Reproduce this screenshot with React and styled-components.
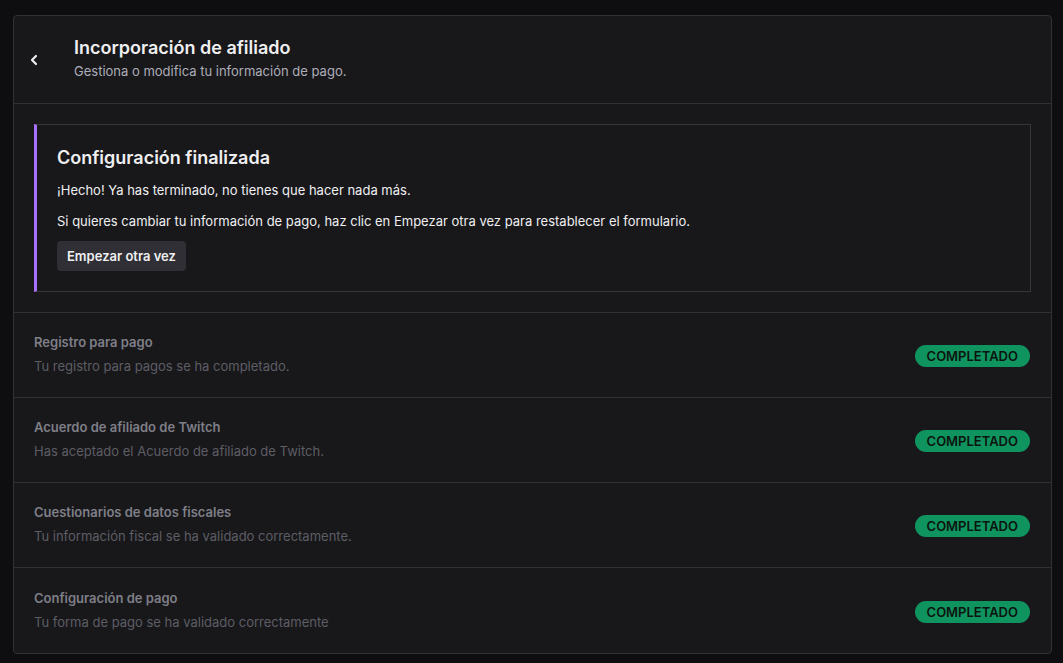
import styled, { createGlobalStyle } from "styled-components";

const GlobalStyle = createGlobalStyle`
  html, body {
    margin: 0;
    background: #0e0e10;
    font-family: Inter, "Noto Sans", "Liberation Sans", sans-serif;
    color: #efeff1;
  }
  * { box-sizing: border-box; }
`;

const Page = styled.div`
  padding: 15px 11px 10px 13px;
`;

const Card = styled.div`
  background: #18181b;
  border: 1px solid #303035;
  border-radius: 4px;
  overflow: hidden;
`;

const Header = styled.div`
  display: flex;
  align-items: center;
  height: 88px;
  padding: 0 20px 0 5px;
  border-bottom: 1px solid #303035;
`;

const BackButton = styled.button`
  width: 30px;
  height: 30px;
  display: flex;
  align-items: center;
  justify-content: center;
  background: none;
  border: 0;
  padding: 0;
  margin-right: 25px;
  color: #efeff1;
  cursor: pointer;
`;

const HeaderText = styled.div`
  display: flex;
  flex-direction: column;
  gap: 3px;
  margin-top: -2px;
`;

const Title = styled.h1`
  margin: 0;
  font-size: 18px;
  font-weight: 600;
  line-height: 22px;
  color: #efeff1;
`;

const Subtitle = styled.p`
  margin: 0;
  font-size: 13px;
  line-height: 18px;
  color: #adadb8;
`;

const Section = styled.div`
  padding: 20px 20px;
  border-bottom: 1px solid #303035;
`;

const Notice = styled.div`
  border: 1px solid #35353b;
  border-left: 3px solid #a970ff;
  padding: 22px 20px 20px;
  display: flex;
  flex-direction: column;
  align-items: flex-start;
`;

const NoticeTitle = styled.h2`
  margin: 0 0 12px;
  font-size: 18px;
  font-weight: 600;
  line-height: 22px;
  color: #efeff1;
`;

const NoticeText = styled.p`
  margin: 0 0 13px;
  font-size: 13px;
  line-height: 18px;
  color: #efeff1;
`;

const Button = styled.button`
  margin-top: -2px;
  height: 30px;
  padding: 0 10px;
  border: 0;
  border-radius: 4px;
  background: #2f2f35;
  color: #efeff1;
  font-family: inherit;
  font-size: 13px;
  font-weight: 600;
  cursor: pointer;
`;

const Step = styled.div`
  display: flex;
  align-items: center;
  justify-content: space-between;
  height: 85px;
  padding: 0 20px;
  border-bottom: ${(p) => (p.$last ? "none" : "1px solid #303035")};
`;

const StepText = styled.div`
  display: flex;
  flex-direction: column;
  gap: 6px;
  margin-top: -2px;
`;

const StepTitle = styled.div`
  font-size: 13px;
  font-weight: 600;
  line-height: 18px;
  color: #7f7f87;
`;

const StepDesc = styled.div`
  font-size: 13px;
  line-height: 18px;
  color: #5d5d64;
`;

const Badge = styled.span`
  display: inline-flex;
  align-items: center;
  height: 22px;
  padding: 0 12px;
  border-radius: 11px;
  background: #10945f;
  color: #0c140f;
  font-size: 13px;
  font-weight: 600;
  margin-top: 2px;
  margin-right: 1px;
`;

const steps = [
  ["Registro para pago", "Tu registro para pagos se ha completado."],
  ["Acuerdo de afiliado de Twitch", "Has aceptado el Acuerdo de afiliado de Twitch."],
  ["Cuestionarios de datos fiscales", "Tu información fiscal se ha validado correctamente."],
  ["Configuración de pago", "Tu forma de pago se ha validado correctamente"],
];

export default function App() {
  return (
    <>
      <GlobalStyle />
      <Page>
        <Card>
          <Header>
            <BackButton aria-label="Volver">
              <svg width="14" height="14" viewBox="0 0 14 14" fill="none">
                <path d="M9 3 L5 7 L9 11" stroke="currentColor" strokeWidth="2.2" strokeLinecap="round" strokeLinejoin="round" />
              </svg>
            </BackButton>
            <HeaderText>
              <Title>Incorporación de afiliado</Title>
              <Subtitle>Gestiona o modifica tu información de pago.</Subtitle>
            </HeaderText>
          </Header>
          <Section>
            <Notice>
              <NoticeTitle>Configuración finalizada</NoticeTitle>
              <NoticeText>¡Hecho! Ya has terminado, no tienes que hacer nada más.</NoticeText>
              <NoticeText>
                Si quieres cambiar tu información de pago, haz clic en Empezar otra vez para restablecer el formulario.
              </NoticeText>
              <Button>Empezar otra vez</Button>
            </Notice>
          </Section>
          {steps.map(([t, d], i) => (
            <Step key={t} $last={i === steps.length - 1}>
              <StepText>
                <StepTitle>{t}</StepTitle>
                <StepDesc>{d}</StepDesc>
              </StepText>
              <Badge>COMPLETADO</Badge>
            </Step>
          ))}
        </Card>
      </Page>
    </>
  );
}
